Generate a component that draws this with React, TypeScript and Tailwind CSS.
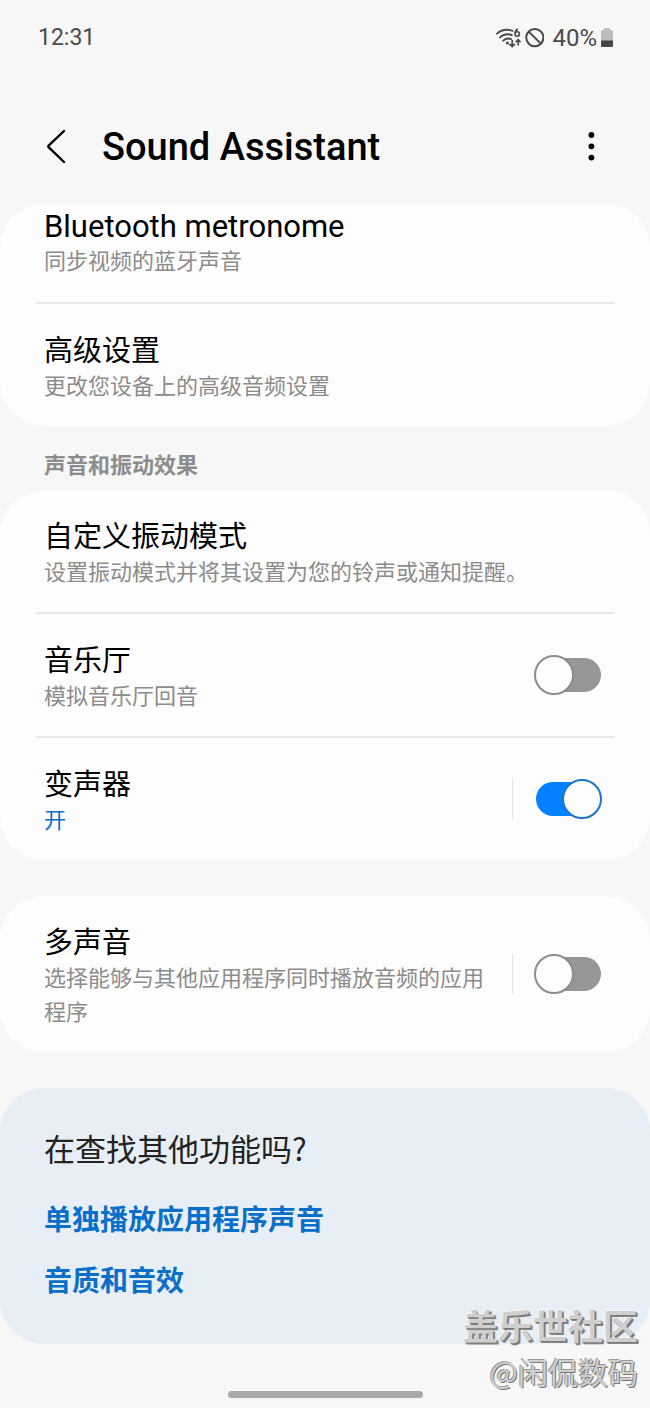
import { useState } from "react";
import type { ReactNode } from "react";

const WifiIcon = () => (
  <svg className="h-5 w-[26px]" viewBox="0 0 26 20" fill="none" stroke="#4a4a4a" aria-hidden="true">
    <path d="M2 5.6C6 2 12 .8 17.4 2.8" strokeWidth="1.9" strokeLinecap="round" />
    <path d="M5 9.4C8 6.6 12.4 5.6 16.8 7" strokeWidth="1.9" strokeLinecap="round" />
    <path d="M8.2 12.6C10.4 10.6 13.2 10 16 11" strokeWidth="1.9" strokeLinecap="round" />
    <circle cx="12.4" cy="15" r="1.5" fill="#4a4a4a" stroke="none" />
    <path d="M23 1C21 1.8 20 3.4 20 5.6" strokeWidth="1.6" />
    <circle cx="22.2" cy="6" r="2.2" strokeWidth="1.6" />
    <path d="M17.2 12V18.2M14.4 15.8L17.2 18.6L20 15.8" strokeWidth="1.7" />
    <path d="M23.2 17.6V12M20.8 14.2L23.2 11.8L25.6 14.2" strokeWidth="1.7" />
  </svg>
);

const BlockedIcon = () => (
  <svg className="size-5" viewBox="0 0 20 20" fill="none" stroke="#4a4a4a" strokeWidth="2" aria-hidden="true">
    <circle cx="10.8" cy="9.6" r="8.6" />
    <path d="M4.8 3.6L16.8 15.6" />
  </svg>
);

const BatteryIcon = () => (
  <svg className="h-5 w-3" viewBox="0 0 12 20" aria-hidden="true">
    <path d="M3 2V1.2Q3 0 4.2 0H7.8Q9 0 9 1.2V2H10.4Q12 2 12 3.6V17.4Q12 19 10.4 19H1.6Q0 19 0 17.4V3.6Q0 2 1.6 2Z" fill="#bdbdbd" />
    <path d="M0 12.6H12V17.4Q12 19 10.4 19H1.6Q0 19 0 17.4Z" fill="#444444" />
  </svg>
);

const StatusBar = () => (
  <div className="flex h-[76px] items-center justify-between pr-[37px] pl-[38px] text-[#4a4a4a]">
    <span className="text-[23px]">12:31</span>
    <div className="flex items-center text-[24px]">
      <WifiIcon />
      <span className="ml-[3px]">
        <BlockedIcon />
      </span>
      <span className="ml-2">40%</span>
      <span className="ml-1">
        <BatteryIcon />
      </span>
    </div>
  </div>
);

const Header = () => (
  <header className="flex h-32 items-center px-10 pt-[14px]">
    <button type="button" aria-label="Back" className="flex h-12 w-8 items-center justify-center">
      <svg className="h-9 w-6" viewBox="0 0 24 36" fill="none" stroke="#000" strokeWidth="2.4" strokeLinecap="round" strokeLinejoin="round">
        <path d="M20 2L4.6 16.6Q3.8 17.4 4.6 18.2L20 33" />
      </svg>
    </button>
    <h1 className="ml-[30px] flex-1 text-[38px] font-medium text-black">Sound Assistant</h1>
    <button type="button" aria-label="More options" className="flex h-12 w-[38px] items-center justify-center">
      <svg className="h-8 w-2" viewBox="0 0 8 32" fill="#000">
        <circle cx="4.4" cy="4" r="2.9" />
        <circle cx="4.4" cy="15.3" r="2.9" />
        <circle cx="4.4" cy="26.6" r="2.9" />
      </svg>
    </button>
  </header>
);

const Divider = () => <hr className="mx-9 h-[2px] border-0 bg-[#e8e8e8]" />;

const Card = ({ children }: { children: ReactNode }) => (
  <section className="overflow-hidden rounded-[44px] bg-[#fdfdfd]">{children}</section>
);

type TextProps = { title: string; desc: string; active?: boolean; latin?: boolean };

const RowText = ({ title, desc, active, latin }: TextProps) => (
  <>
    <span className={latin ? "block text-[31px] leading-[37px] text-black" : "block text-[29px] leading-[37px] text-black"}>
      {title}
    </span>
    <span className={active ? "block text-[22px] leading-[34px] text-[#0a6fc8]" : "block text-[22px] leading-[34px] text-[#8c8c8c]"}>
      {desc}
    </span>
  </>
);

const LinkRow = ({ title, desc }: TextProps) => (
  <a href="#" className="block px-11 pt-[29px] pb-[22px]">
    <RowText title={title} desc={desc} />
  </a>
);

type SwitchRowProps = {
  id: string;
  title: string;
  desc: string;
  initial?: boolean;
  split?: boolean;
};

const SwitchRow = ({ id, title, desc, initial = false, split }: SwitchRowProps) => {
  const [on, setOn] = useState(initial);

  return (
    <div className="flex items-center py-[22px] pr-[49px] pl-11">
      <label htmlFor={id} className="flex-1 pt-[7px]">
        <RowText title={title} desc={desc} active={on} />
      </label>
      {split && <span className="ml-5 h-10 w-px bg-[#e2e2e2]" />}
      <input
        id={id}
        type="checkbox"
        role="switch"
        checked={on}
        onChange={(e) => setOn(e.target.checked)}
        className="relative ml-[23px] h-[34px] w-[65px] shrink-0 appearance-none rounded-full bg-[#969696] before:absolute before:-top-[3px] before:-left-[2px] before:size-10 before:rounded-full before:border-2 before:border-[#8c8c8c] before:bg-[#fdfdfd] checked:bg-[#0381fe] checked:before:left-[26px] checked:before:border-[#1a75d1]"
      />
    </div>
  );
};

const MoreFeatures = () => (
  <section className="mt-9 flex flex-col items-start rounded-[44px] bg-[#e8eef5] px-11 pt-10 pb-11 font-['Noto_Sans_CJK_SC',sans-serif]">
    <h2 className="text-[31px] leading-10 text-[#222]">在查找其他功能吗?</h2>
    <a href="#" className="mt-[29px] text-[28px] leading-[42px] font-bold text-[#0a6fc8]">
      单独播放应用程序声音
    </a>
    <a href="#" className="mt-[19px] text-[28px] leading-[42px] font-bold text-[#0a6fc8]">
      音质和音效
    </a>
  </section>
);

const Watermark = () => (
  <div className="pointer-events-none absolute right-3 bottom-[14px] text-right font-['Noto_Sans_CJK_SC',sans-serif] text-[#cfcfcf]">
    <p className="text-[35px] leading-[46px] font-bold [text-shadow:1px_1px_0_#777,2px_2px_0_#888,-1px_-1px_0_#f4f4f4]">盖乐世社区</p>
    <p className="text-[30px] leading-[46px] [text-shadow:1px_1px_0_#777,-1px_-1px_0_#999]">@闲侃数码</p>
  </div>
);

export default function App() {
  return (
    <div
      lang="zh-CN"
      className="relative flex min-h-screen flex-col bg-[#f7f7f7] font-['Roboto','Noto_Sans_CJK_SC',sans-serif]"
    >
      <StatusBar />
      <Header />
      <main>
        <Card>
          {/* first row is scrolled partly under the header */}
          <a href="#" className="block px-11 pt-1 pb-[23px]">
            <RowText title="Bluetooth metronome" desc="同步视频的蓝牙声音" latin />
          </a>
          <Divider />
          <LinkRow title="高级设置" desc="更改您设备上的高级音频设置" />
        </Card>
        <h2 className="px-11 pt-[23px] pb-[7px] text-[22px] leading-[34px] font-bold text-[#8c8c8c]">声音和振动效果</h2>
        <Card>
          <LinkRow title="自定义振动模式" desc="设置振动模式并将其设置为您的铃声或通知提醒。" />
          <Divider />
          <SwitchRow id="concert-hall" title="音乐厅" desc="模拟音乐厅回音" />
          <Divider />
          <SwitchRow id="voice-changer" title="变声器" desc="开" initial split />
        </Card>
        <div className="mt-9">
          <Card>
            <SwitchRow id="multi-sound" title="多声音" desc="选择能够与其他应用程序同时播放音频的应用程序" split />
          </Card>
        </div>
        <MoreFeatures />
      </main>
      <div className="mx-auto mt-auto mb-[10px] h-[7px] w-[30%] rounded-full bg-[#a9a9a9]" />
      <Watermark />
    </div>
  );
}
